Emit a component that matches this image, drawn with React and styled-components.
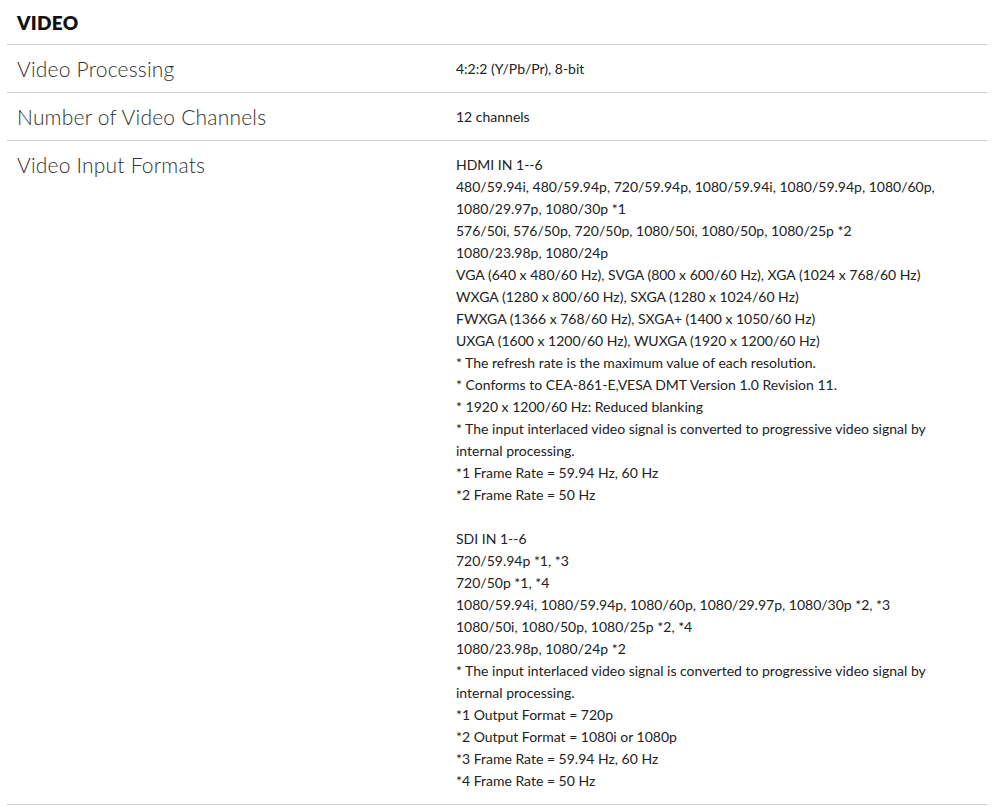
import React from "react";
import styled, { createGlobalStyle } from "styled-components";

const Global = createGlobalStyle`
  html, body { margin: 0; padding: 0; background: #fff; }
  body { font-family: "Lato", "Open Sans", sans-serif; color: #222; }
`;

const Page = styled.div`
  width: 980px;
  margin: 0 7px;
`;

const Heading = styled.h2`
  margin: 0;
  padding: 10px 10px 9px;
  font-size: 19px;
  line-height: 25px;
  font-weight: 800;
  letter-spacing: 0.3px;
  color: #111;
  border-bottom: 1px solid #ccc;
`;

const Row = styled.div`
  display: grid;
  grid-template-columns: 449px 1fr;
  border-bottom: 1px solid #ccc;
  padding: 13px 0 12px;
`;

const Label = styled.div`
  padding-left: 10px;
  font-size: 21px;
  line-height: 22px;
  font-weight: 300;
  letter-spacing: 0.2px;
  color: #333;
`;

const Value = styled.div`
  font-size: 14px;
  line-height: 22px;
  color: #222;
`;

const Line = styled.div`
  min-height: 22px;
`;

const specs = [
  { label: "Video Processing", lines: ["4:2:2 (Y/Pb/Pr), 8-bit"] },
  { label: "Number of Video Channels", lines: ["12 channels"] },
  {
    label: "Video Input Formats",
    lines: [
      "HDMI IN 1--6",
      "480/59.94i, 480/59.94p, 720/59.94p, 1080/59.94i, 1080/59.94p, 1080/60p,",
      "1080/29.97p, 1080/30p *1",
      "576/50i, 576/50p, 720/50p, 1080/50i, 1080/50p, 1080/25p *2",
      "1080/23.98p, 1080/24p",
      "VGA (640 x 480/60 Hz), SVGA (800 x 600/60 Hz), XGA (1024 x 768/60 Hz)",
      "WXGA (1280 x 800/60 Hz), SXGA (1280 x 1024/60 Hz)",
      "FWXGA (1366 x 768/60 Hz), SXGA+ (1400 x 1050/60 Hz)",
      "UXGA (1600 x 1200/60 Hz), WUXGA (1920 x 1200/60 Hz)",
      "* The refresh rate is the maximum value of each resolution.",
      "* Conforms to CEA-861-E,VESA DMT Version 1.0 Revision 11.",
      "* 1920 x 1200/60 Hz: Reduced blanking",
      "* The input interlaced video signal is converted to progressive video signal by",
      "internal processing.",
      "*1 Frame Rate = 59.94 Hz, 60 Hz",
      "*2 Frame Rate = 50 Hz",
      "",
      "SDI IN 1--6",
      "720/59.94p *1, *3",
      "720/50p *1, *4",
      "1080/59.94i, 1080/59.94p, 1080/60p, 1080/29.97p, 1080/30p *2, *3",
      "1080/50i, 1080/50p, 1080/25p *2, *4",
      "1080/23.98p, 1080/24p *2",
      "* The input interlaced video signal is converted to progressive video signal by",
      "internal processing.",
      "*1 Output Format = 720p",
      "*2 Output Format = 1080i or 1080p",
      "*3 Frame Rate = 59.94 Hz, 60 Hz",
      "*4 Frame Rate = 50 Hz",
    ],
  },
];

export default function App() {
  return (
    <Page>
      <Global />
      <Heading>VIDEO</Heading>
      {specs.map((s) => (
        <Row key={s.label}>
          <Label>{s.label}</Label>
          <Value>
            {s.lines.map((l, i) => (
              <Line key={i}>{l}</Line>
            ))}
          </Value>
        </Row>
      ))}
    </Page>
  );
}
